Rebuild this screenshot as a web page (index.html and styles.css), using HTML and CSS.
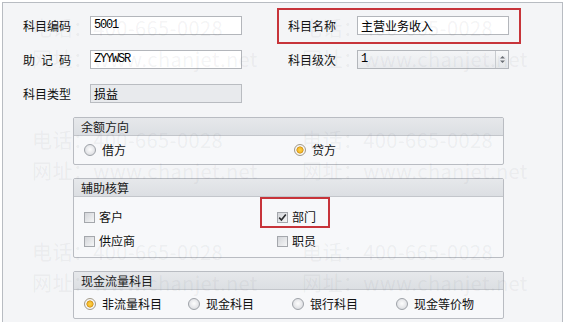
FILE: index.html
```html
<!DOCTYPE html>
<html lang="zh-CN">
<head>
  <meta charset="UTF-8" />
  <title>科目</title>
  <link rel="stylesheet" href="styles.css">
</head>
<body>
  <div class="panel">
    <div class="fields">
      <div class="pair">
        <span class="lbl">科目编码</span>
        <div class="box">5001</div>
      </div>
      <div class="pair right hl">
        <span class="lbl">科目名称</span>
        <div class="box cn">主营业务收入</div>
      </div>
      <div class="pair">
        <span class="lbl spread">助记码</span>
        <div class="box">ZYYWSR</div>
      </div>
      <div class="pair right">
        <span class="lbl">科目级次</span>
        <div class="box select">
          <span class="val">1</span>
          <span class="spin">
            <svg width="7" height="9" viewBox="0 0 7 9"><path d="M3.5 1 L6 3.5 H1 Z M1 5.5 H6 L3.5 8 Z" fill="#6b6f75"/></svg>
          </span>
        </div>
      </div>
      <div class="pair">
        <span class="lbl">科目类型</span>
        <div class="box cn off">损益</div>
      </div>
    </div>

    <div class="group g1">
      <div class="group-hd">余额方向</div>
      <div class="group-bd cols-dir">
        <label class="opt"><span class="radio"></span>借方</label>
        <label class="opt"><span class="radio on"></span>贷方</label>
      </div>
    </div>

    <div class="group">
      <div class="group-hd">辅助核算</div>
      <div class="group-bd cols-aux">
        <label class="opt"><span class="check"></span>客户</label>
        <label class="opt hl hl-dept">
          <span class="check">
            <svg width="9" height="9" viewBox="0 0 9 9"><path d="M1.2 4.6 L3.4 7 L7.8 1.4" fill="none" stroke="#2b2d30" stroke-width="1.6"/></svg>
          </span>部门
        </label>
        <label class="opt"><span class="check"></span>供应商</label>
        <label class="opt"><span class="check"></span>职员</label>
      </div>
    </div>

    <div class="group">
      <div class="group-hd">现金流量科目</div>
      <div class="group-bd cols-cash">
        <label class="opt"><span class="radio on"></span>非流量科目</label>
        <label class="opt"><span class="radio"></span>现金科目</label>
        <label class="opt"><span class="radio"></span>银行科目</label>
        <label class="opt"><span class="radio"></span>现金等价物</label>
      </div>
    </div>
  </div>

  <!-- watermark tiles -->
  <div class="wm">
    <div class="wm-tile">电话：400-665-0028<br>网址：www.chanjet.net</div>
    <div class="wm-tile">电话：400-665-0028<br>网址：www.chanjet.net</div>
    <div class="wm-tile">电话：400-665-0028<br>网址：www.chanjet.net</div>
    <div class="wm-tile">电话：400-665-0028<br>网址：www.chanjet.net</div>
    <div class="wm-tile">电话：400-665-0028<br>网址：www.chanjet.net</div>
    <div class="wm-tile">电话：400-665-0028<br>网址：www.chanjet.net</div>
  </div>
</body>
</html>
```

FILE: styles.css
```css
* { box-sizing: border-box; }
html, body {
  margin: 0;
  height: 322px;
  overflow: hidden;
}
body {
  position: relative;
  background: #ffffff;
  font-family: "Noto Sans CJK SC", "Liberation Sans", sans-serif;
  font-size: 12px;
  color: #111;
}
.panel {
  margin: 2px 3px 0 2px;
  height: 320px;
  background: #f4f5f7;
  border: 1px solid #b8bcc2;
  border-bottom: none;
  overflow: hidden;
}

/* top fields */
.fields {
  display: grid;
  grid-template-columns: 219px 221px;
  column-gap: 46px;
  row-gap: 15px;
  grid-auto-rows: 19px;
  padding: 13px 0 0 20px;
}
.pair {
  display: flex;
  align-items: center;
}
.lbl {
  flex: 0 0 67px;
  line-height: 19px;
}
.pair.right .lbl { flex-basis: 69px; }
.spread { letter-spacing: 6px; }
.box {
  width: 152px;
  height: 19px;
  border: 1px solid #b3b6bb;
  background: #fff;
  padding: 0 3px;
  font-family: "Liberation Mono", monospace;
  font-size: 12px;
  letter-spacing: -1.2px;
  line-height: 17px;
  color: #000;
}
.box.cn {
  font-family: "Noto Sans CJK SC", sans-serif;
  letter-spacing: 0;
}
.box.off {
  background: #e8eaed;
  border-color: #b9bcc1;
}
.select {
  display: flex;
  padding-right: 0;
  background: linear-gradient(#f3f4f6, #e9ebee);
}
.select .val { flex: 1; }
.spin {
  width: 13px;
  border-left: 1px solid #c8cbcf;
  display: flex;
  align-items: center;
  justify-content: center;
  background: linear-gradient(#f7f8f9, #e4e6e9);
}

/* red highlight frames */
.hl { position: relative; }
.hl::after {
  content: "";
  position: absolute;
  left: -11px;
  right: -12px;
  top: -8px;
  bottom: -9px;
  border: 2px solid #c7343a;
  pointer-events: none;
}
.hl-dept::after {
  left: -17px;
  right: -14px;
  top: -12px;
  bottom: -3px;
}

/* group boxes */
.group {
  margin: 13px 0 0 70px;
  width: 431px;
  border: 1px solid #b9bcc2;
  border-radius: 2px;
  background: #f7f8fa;
}
.g1 { margin-top: 14px; }
.group-hd {
  height: 18px;
  line-height: 17px;
  padding-left: 7px;
  background: linear-gradient(#e6e8eb, #dcdfe3);
  border-bottom: 1px solid #c3c6cb;
  font-size: 12px;
  color: #1a1a1a;
}
.group-bd {
  display: grid;
  align-items: center;
  padding-left: 10px;
  min-height: 28px;
}
.cols-dir { grid-template-columns: 210px auto; }
.cols-aux {
  grid-template-columns: 193px auto;
  grid-auto-rows: 16px;
  row-gap: 8px;
  padding-top: 12px;
  padding-bottom: 8px;
}
.cols-cash { grid-template-columns: repeat(4, 104px); }

.opt {
  display: flex;
  align-items: center;
  line-height: 16px;
  font-size: 12px;
  justify-self: start;
}
.radio {
  width: 12px;
  height: 12px;
  margin-right: 6px;
  border-radius: 50%;
  border: 1px solid #9ea2a8;
  background: radial-gradient(circle at 50% 45%, #fdfdfd 0, #e6e7ea 55%, #cfd2d6 100%);
}
.radio.on {
  border-color: #a29a88;
  background: radial-gradient(circle, #ffd34a 0, #f3b82a 2.4px, #c88a12 3.2px, #fbfbfb 3.9px, #e2e3e6 100%);
}
.check {
  width: 11px;
  height: 11px;
  margin-right: 4px;
  border: 1px solid #a4a7ac;
  background: linear-gradient(135deg, #d3d5d9, #f5f6f7);
  display: flex;
  align-items: center;
  justify-content: center;
}

/* watermark over everything */
.wm {
  position: absolute;
  left: 32px;
  top: 12px;
  display: grid;
  grid-template-columns: 270px 270px;
  grid-auto-rows: 62px;
  row-gap: 50px;
  pointer-events: none;
}
.wm-tile {
  font-size: 20px;
  line-height: 31px;
  white-space: nowrap;
  letter-spacing: 0.4px;
  color: rgba(100, 106, 116, 0.08);
}
```
